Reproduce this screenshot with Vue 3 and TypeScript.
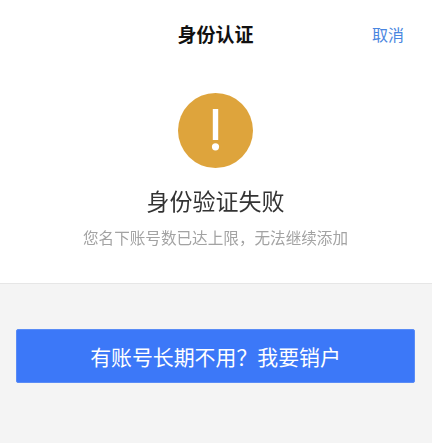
<template>
  <div class="page">
    <section class="top">
      <header class="nav">
        <h1 class="nav-title">身份认证</h1>
        <a class="nav-cancel">取消</a>
      </header>
      <div class="result">
        <svg class="result-icon" viewBox="0 0 75 75" aria-hidden="true">
          <circle cx="37.5" cy="37.5" r="37.5" fill="#dea43c" />
          <rect x="34.8" y="16" width="5.4" height="31" fill="#fff" />
          <circle cx="37.5" cy="53.8" r="3.6" fill="#fff" />
        </svg>
        <h2 class="result-title">身份验证失败</h2>
        <p class="result-desc">您名下账号数已达上限&#xFF0C;无法继续添加</p>
      </div>
    </section>
    <section class="bottom">
      <button type="button" class="btn-primary">有账号长期不用&#xFF1F;我要销户</button>
    </section>
  </div>
</template>

<script setup lang="ts">
</script>

<style>
html,
body {
  margin: 0;
  background: #f4f4f4;
}
</style>

<style scoped>
.page {
  height: 443px;
  overflow: hidden;
  display: flex;
  flex-direction: column;
  font-family: "Noto Sans CJK SC", "Liberation Sans", sans-serif;
  background: #f4f4f4;
}

.top {
  height: 284px;
  box-sizing: border-box;
  padding-right: 1px;
  background: #fff;
  border-bottom: 1px solid #e6e6e6;
}

.nav {
  height: 68px;
  display: flex;
  align-items: center;
  justify-content: center;
  position: relative;
}

.nav-title {
  margin: 0;
  font-size: 19px;
  line-height: 22px;
  font-weight: 700;
  color: #111;
}

.nav-cancel {
  position: absolute;
  right: 27px;
  top: 23px;
  font-size: 16px;
  line-height: 22px;
  color: #4a86e0;
}

.result {
  display: flex;
  flex-direction: column;
  align-items: center;
}

.result-icon {
  width: 75px;
  height: 75px;
  margin-top: 25px;
}

.result-title {
  margin: 16px 0 0;
  font-size: 23px;
  line-height: 32px;
  font-weight: 400;
  color: #333;
  will-change: opacity;
}

.result-desc {
  margin: 10px 0 0;
  font-size: 15.6px;
  line-height: 22px;
  color: #a3a3a3;
  will-change: opacity;
}

.bottom {
  flex: 1;
  padding: 45px 17px 0 16px;
}

.btn-primary {
  display: block;
  width: 100%;
  height: 54px;
  padding: 0;
  border: 1px solid #5a8cf6;
  border-radius: 2px;
  background: #3c78f8;
  color: #fff;
  font-family: inherit;
  font-size: 20.9px;
  font-weight: 400;
}
</style>
